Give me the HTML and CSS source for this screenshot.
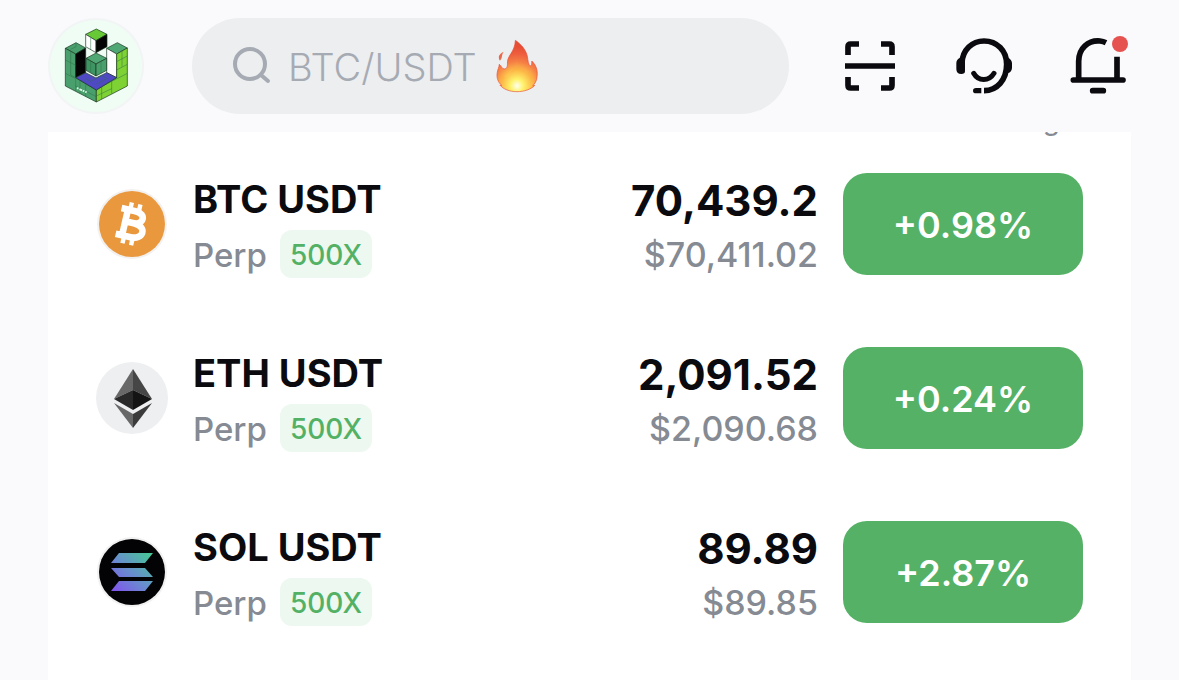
FILE: index.html
```html
<!DOCTYPE html>
<html lang="en">
<head>
<meta charset="utf-8">
<meta name="viewport" content="width=device-width, initial-scale=1">
<title>Markets</title>
<link rel="stylesheet" href="styles.css">
</head>
<body>
<header class="topbar">
  <button class="avatar" type="button" aria-label="Profile">
    <svg viewBox="24 24 288 288" aria-hidden="true">
      <g stroke="#16331f" stroke-width="2" stroke-linejoin="round">
        <path fill="#4aa06c" d="M76 115L108 98L137 114L107 132Z"/>
        <path fill="#4aa06c" d="M76 115L107 132V203L169 240V276L76 228Z"/>
        <path fill="#050505" d="M107 132L137 114V188L107 203Z"/>
        <path fill="#4fa873" d="M200 115L232 98L262 114L230 132Z"/>
        <path fill="#fff" d="M200 115L230 132V203L200 188Z"/>
        <path fill="#7fd234" d="M230 132L262 114V228L169 276V240L230 203Z"/>
        <path fill="#5049c4" d="M107 203L137 188L168 204L200 188L230 203L169 240Z"/>
        <path fill="#4fa873" d="M138 145L168 129L200 145L168 162Z"/>
        <path fill="#3f9463" d="M138 145L168 162V198L138 181Z"/>
        <path fill="#4aa06c" d="M168 162L200 145V181L168 198Z"/>
        <path fill="#67c936" d="M137 73L169 57L201 73L168 92Z"/>
        <path fill="#fff" d="M137 73L168 92V128L137 110Z"/>
        <path fill="#050505" d="M168 92L201 73V110L168 128Z"/>
      </g>
      <path fill="none" stroke="#2c7048" stroke-width="1.5" d="M76 150L92 158V195L107 203M76 190L107 206V243M92 125V158L107 166M120 212V250M137 221V260M107 228L169 260M230 155L262 138M230 180L262 163M215 212V250M200 222L262 190M246 123V170M169 258L215 236M185 230V267M152 84V119M152 154V188M183 154V190M108 98V110L92 118M137 206L152 214L184 196L200 206L169 222"/>
      <path stroke="#d8f4e4" stroke-width="6" stroke-dasharray="5 3 9 2" d="M111 234L140 247"/>
    </svg>
  </button>
  <label class="search">
    <svg class="search-icon" viewBox="0 0 40 40" fill="none" stroke="#a6abb3" stroke-width="4" stroke-linecap="round" aria-hidden="true"><circle cx="18" cy="18" r="15"/><path d="M29 29L36 35"/></svg>
    <input class="search-input" type="text" placeholder="BTC/USDT" aria-label="Search markets">
    <svg class="flame" viewBox="930 88 132 164" aria-hidden="true">
      <defs>
        <radialGradient id="fire" gradientUnits="userSpaceOnUse" cx="996" cy="228" r="118">
          <stop offset="0" stop-color="#fffde0"/><stop offset=".18" stop-color="#fff36a"/><stop offset=".4" stop-color="#fdb94a"/><stop offset=".6" stop-color="#f58045"/><stop offset=".8" stop-color="#ee5f3e"/><stop offset="1" stop-color="#e64d34"/>
        </radialGradient>
        <radialGradient id="core" gradientUnits="userSpaceOnUse" cx="996" cy="230" r="66">
          <stop offset="0" stop-color="#fffff0"/><stop offset=".3" stop-color="#fff26b"/><stop offset=".75" stop-color="#fbb040" stop-opacity=".6"/><stop offset="1" stop-color="#f79a45" stop-opacity=".3"/>
        </radialGradient>
      </defs>
      <path fill="url(#fire)" stroke="#e8503a" stroke-width="2" d="M991 92C1005 102 1027 120 1029 151C1031 165 1034 171 1038 169C1042 166 1040 160 1041 155C1051 164 1060 180 1057 201C1057 214 1050 224 1044 230L1050 229C1038 241 1018 248 996 248C973 248 954 240 944 228L950 229C938 220 933 204 936 190C937 180 942 174 942 165C948 168 950 179 957 179C965 179 968 171 967 161C966 137 989 130 991 92Z"/>
      <path fill="#ee6748" d="M956 127C948 134 954 144 944 154C937 142 942 133 956 127Z"/>
      <path fill="url(#core)" d="M993 148C993 167 1020 174 1022 190C1030 193 1037 186 1039 181C1052 213 1034 244 996 245C958 244 941 218 949 196C955 205 968 206 973 195C982 179 994 171 993 148Z"/>
    </svg>
  </label>
  <nav class="tools" aria-label="Tools">
    <button class="tool" type="button" aria-label="Scan">
      <svg viewBox="30 48 180 180" fill="none" stroke="#0b0b0f" stroke-width="17" aria-hidden="true"><path d="M54 105V80Q54 72 62 72H87M153 72H178Q186 72 186 80V105M186 171V196Q186 204 178 204H153M87 204H62Q54 204 54 196V171M45 138H195"/></svg>
    </button>
    <button class="tool" type="button" aria-label="Support">
      <svg viewBox="372 48 180 180" fill="none" stroke="#0b0b0f" stroke-width="17" aria-hidden="true"><path d="M396 150V128C398 90 426 63 462 63C501 63 530 92 530 133C530 180 501 212 462 212"/><path fill="#0b0b0f" stroke="none" d="M390 113H405V154Q405 162 394 162Q379 162 379 147V129Q379 119 390 113ZM534 113Q546 119 546 130V143Q546 155 533 160L524 153V120Z"/><path stroke-linecap="round" stroke-width="15" d="M431 160C445 185 477 185 492 160"/><path fill="#0b0b0f" stroke="none" d="M454 204H438Q429 204 429 212T438 220H454Z"/></svg>
    </button>
    <button class="tool" type="button" aria-label="Notifications">
      <svg viewBox="714 48 180 180" fill="none" stroke="#0b0b0f" stroke-width="17" aria-hidden="true"><path d="M746 178V124C746 84 775 60 810 63Q820 64 828 68M861 110V178"/><path stroke-linecap="round" d="M730 180H879M788 212H820"/><circle cx="870" cy="72" r="24" fill="#e5524f" stroke="none"/></svg>
    </button>
  </nav>
</header>

<main class="markets">
  <div class="column-head"><span class="column-label">g</span></div>
  <ul class="list">
    <li class="row">
      <svg class="coin" viewBox="0 0 72 72" aria-hidden="true"><circle cx="36" cy="36" r="35" fill="#f3f1ef"/><circle cx="36" cy="36" r="33" fill="#e9983d"/><g transform="translate(36 36) rotate(13) scale(1.1) translate(-36.500 -36)" fill="none" stroke="#fff"><path stroke-width="6" d="M24 24H37C48 24 47 35 37 35H30H38C51 35 50 48 38 48H24M30 24V48"/><path stroke-width="4" d="M32 17V24M40 17V25M32 47V55M40 47V55"/></g></svg>
      <div class="pair"><h2 class="name">BTC USDT</h2><p class="meta"><span class="kind">Perp</span><span class="tag">500X</span></p></div>
      <div class="quote"><span class="price">70,439.2</span><span class="usd">$70,411.02</span></div>
      <button class="change" type="button">+0.98%</button>
    </li>
    <li class="row">
      <svg class="coin" viewBox="0 0 72 72" aria-hidden="true"><circle cx="36" cy="36" r="36" fill="#eeeff1"/><path fill="#686868" d="M37 7L18 37L37 28Z"/><path fill="#464646" d="M37 7L56 37L37 28Z"/><path fill="#292929" d="M18 37L37 28V48Z"/><path fill="#141414" d="M56 37L37 28V48Z"/><path fill="#686868" d="M18 41L37 52V66Z"/><path fill="#3b3b3b" d="M56 41L37 52V66Z"/></svg>
      <div class="pair"><h2 class="name">ETH USDT</h2><p class="meta"><span class="kind">Perp</span><span class="tag">500X</span></p></div>
      <div class="quote"><span class="price">2,091.52</span><span class="usd">$2,090.68</span></div>
      <button class="change" type="button">+0.24%</button>
    </li>
    <li class="row">
      <svg class="coin" viewBox="0 0 72 72" aria-hidden="true"><defs><linearGradient id="sol" gradientUnits="userSpaceOnUse" x1="17" y1="56" x2="54" y2="16"><stop offset="0" stop-color="#8252ee"/><stop offset=".5" stop-color="#6790cc"/><stop offset="1" stop-color="#45c994"/></linearGradient></defs><circle cx="36" cy="36" r="35" fill="#f1f1f1"/><circle cx="36" cy="36" r="33" fill="#030305"/><path fill="url(#sol)" d="M23 17H57L49 27H15ZM15 32H49L57 41H23ZM23 45H57L49 55H15Z"/></svg>
      <div class="pair"><h2 class="name">SOL USDT</h2><p class="meta"><span class="kind">Perp</span><span class="tag">500X</span></p></div>
      <div class="quote"><span class="price">89.89</span><span class="usd">$89.85</span></div>
      <button class="change" type="button">+2.87%</button>
    </li>
  </ul>
</main>
</body>
</html>
```
FILE: styles.css
```css
* { box-sizing: border-box; }

body {
  margin: 0;
  min-height: 100vh;
  display: flex;
  flex-direction: column;
  background: #fafafc;
  color: #0b0b0f;
  font-family: Inter, "Liberation Sans", sans-serif;
}

button {
  padding: 0;
  border: 0;
  background: none;
  color: inherit;
  font: inherit;
  cursor: pointer;
}

svg { display: block; flex: none; overflow: visible; }

.topbar {
  display: flex;
  align-items: center;
  padding: 18px 51px 18px 48px;
}

.avatar {
  flex: none;
  width: 96px;
  height: 96px;
  border-radius: 50%;
  background: #effdf4;
  box-shadow: inset 0 0 0 2px #f3f4f6;
}

.search {
  flex: 1;
  min-width: 0;
  display: flex;
  align-items: center;
  height: 96px;
  margin: 0 51px 0 48px;
  padding: 0 40px;
  border-radius: 48px;
  background: #edeef0;
}

.search-icon { width: 40px; height: 40px; }

.search-input {
  width: 200px;
  margin: 2px 7px 0 16px;
  padding: 0;
  border: 0;
  outline: 0;
  background: none;
  color: #0b0b0f;
  font: 300 38px/48px Inter, "Liberation Sans", sans-serif;
}

.search-input::placeholder { color: #a6abb3; opacity: 1; }

.flame { width: 44px; height: 54px; }

.tools { display: flex; gap: 54px; }

.tool svg { width: 60px; height: 60px; }

.markets {
  flex: 1;
  margin: 0 48px;
  padding: 0 48px;
  background: #fff;
}

.column-head {
  display: flex;
  justify-content: flex-end;
  align-items: flex-end;
  height: 5px;
  padding-right: 23px;
  overflow: hidden;
}

.column-label {
  color: #858a93;
  font-size: 28px;
  line-height: 34px;
}

.list { margin: 0; padding: 0; list-style: none; }

.row {
  display: flex;
  align-items: center;
  gap: 25px;
  height: 174px;
}

.coin { width: 72px; height: 72px; }

.pair { flex: 1; padding-top: 6px; }

.name {
  margin: 0;
  font-size: 38px;
  font-weight: 700;
  line-height: 46px;
}

.meta {
  display: flex;
  align-items: center;
  gap: 13px;
  margin: 8px 0 0;
}

.kind,
.usd {
  color: #858a93;
  font-weight: 500;
  line-height: 48px;
}

.kind { padding-top: 2px; font-size: 33px; line-height: 46px; }

.tag {
  height: 48px;
  padding: 2px 10px 0;
  border-radius: 12px;
  background: #edf8f0;
  color: #53b165;
  font-size: 28px;
  font-weight: 500;
  line-height: 46px;
}

.quote {
  display: flex;
  flex-direction: column;
  gap: 5px;
  padding-top: 6px;
  text-align: right;
}

.price {
  font-size: 42px;
  font-weight: 700;
  line-height: 50px;
}

.usd { font-size: 34px; }

.change {
  flex: none;
  width: 240px;
  height: 102px;
  padding-top: 2px;
  border-radius: 24px;
  background: #54b165;
  color: #fff;
  font-size: 36px;
  font-weight: 600;
}
```
